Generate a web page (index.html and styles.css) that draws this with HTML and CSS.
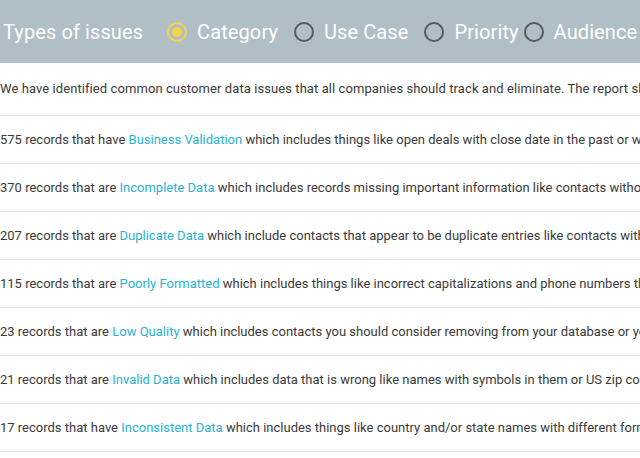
FILE: index.html
```html
<!DOCTYPE html>
<html lang="en">
<head>
    <meta charset="UTF-8">
    <meta name="viewport" content="width=device-width, initial-scale=1.0">
    <title>Types of issues</title>
    <link rel="stylesheet" href="styles.css">
</head>
<body>
    <div class="filter-bar">
        <span class="filter-title">Types of issues</span>
        <label class="filter-option">
            <span class="radio checked"></span>
            <span>Category</span>
        </label>
        <label class="filter-option">
            <span class="radio"></span>
            <span>Use Case</span>
        </label>
        <label class="filter-option tight">
            <span class="radio"></span>
            <span>Priority</span>
        </label>
        <label class="filter-option">
            <span class="radio"></span>
            <span>Audience</span>
        </label>
    </div>

    <ul class="issue-list">
        <li class="issue intro">We have identified common customer data issues that all companies should track and eliminate. The report shows how many records are affected by each issue.</li>
        <li class="issue">575 records that have <a href="#">Business Validation</a> which includes things like open deals with close date in the past or won deals without an amount.</li>
        <li class="issue">370 records that are <a href="#">Incomplete Data</a> which includes records missing important information like contacts without an email address.</li>
        <li class="issue">207 records that are <a href="#">Duplicate Data</a> which include contacts that appear to be duplicate entries like contacts with the same email.</li>
        <li class="issue">115 records that are <a href="#">Poorly Formatted</a> which includes things like incorrect capitalizations and phone numbers that are not formatted.</li>
        <li class="issue">23 records that are <a href="#">Low Quality</a> which includes contacts you should consider removing from your database or your marketing lists.</li>
        <li class="issue">21 records that are <a href="#">Invalid Data</a> which includes data that is wrong like names with symbols in them or US zip codes with letters.</li>
        <li class="issue">17 records that have <a href="#">Inconsistent Data</a> which includes things like country and/or state names with different formats.</li>
    </ul>
</body>
</html>
```

FILE: styles.css
```css
body {
    margin: 0;
    font-family: Roboto, "Liberation Sans", sans-serif;
    color: #3a3a3a;
    background: #fff;
    overflow: hidden;
}
.filter-bar {
    display: flex;
    align-items: center;
    height: 63px;
    padding-left: 3px;
    background-color: #b0bec5;
    color: #fff;
    font-size: 20px;
    letter-spacing: 0.1px;
    white-space: nowrap;
}
.filter-title {
    margin-right: 24px;
}
.filter-option {
    display: flex;
    align-items: center;
    gap: 10px;
    margin-right: 16px;
}
.filter-option.tight {
    margin-right: 5px;
}
.radio {
    box-sizing: border-box;
    width: 20px;
    height: 20px;
    border: 2px solid #545a5e;
    border-radius: 50%;
    display: flex;
    align-items: center;
    justify-content: center;
}
.radio.checked {
    border-color: #f7d54a;
}
.radio.checked::after {
    content: "";
    width: 10px;
    height: 10px;
    border-radius: 50%;
    background-color: #f7d54a;
}
.issue-list {
    list-style: none;
    margin: 0;
    padding: 0;
}
.issue {
    height: 47px;
    line-height: 47px;
    border-bottom: 1px solid #e0e0e0;
    font-size: 13px;
    white-space: nowrap;
    overflow: hidden;
}
.issue.intro {
    height: 52px;
    line-height: 52px;
    letter-spacing: 0.08px;
}
.issue a {
    color: #27b3d2;
    text-decoration: none;
}
```
